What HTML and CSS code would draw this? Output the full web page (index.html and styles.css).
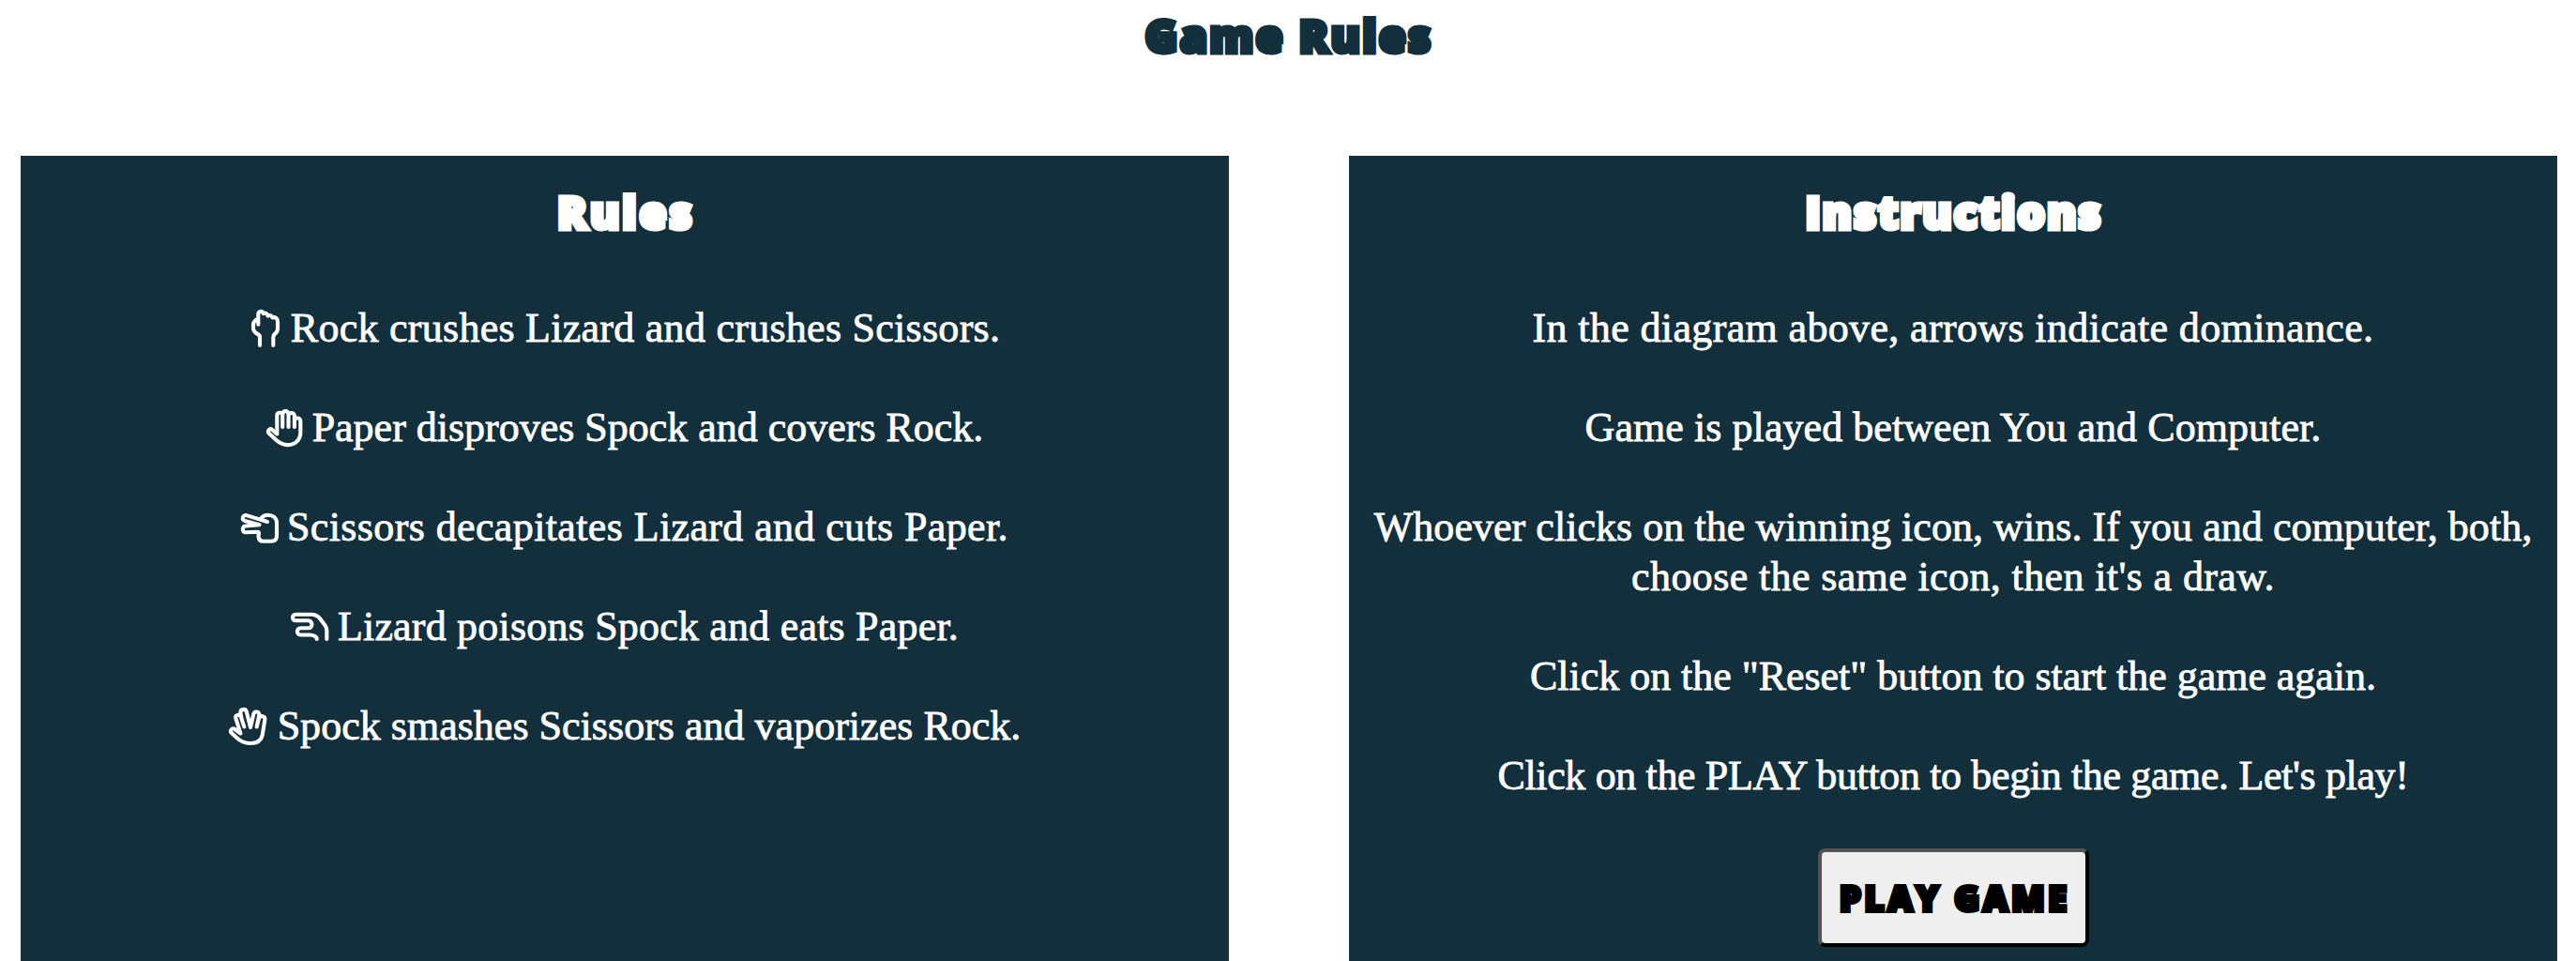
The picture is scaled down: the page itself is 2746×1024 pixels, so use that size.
FILE: index.html
```html
<!DOCTYPE html>
<html lang="en">
<head>
<meta charset="utf-8">
<title>Game Rules</title>
<link rel="stylesheet" href="styles.css">
</head>
<body>
<h1 class="display title">Game Rules</h1>
<main class="panels">
  <section class="panel">
    <h2 class="display heading-rules">Rules</h2>
    <ul class="lines">
      <li class="rule"><svg class="icon" width="35" height="40" viewBox="0 0 35 40"><path d="M11 38V28.6C11 25.5 4 26 4 19.5V16.5C4 13.5 6.3 10.8 9.3 9.7M9.3 15.7V5C9.3 1.4 13.5.7 14.9 4.2 17.2 2.9 19 4.200 19.6 6.6 21.500 5.300 23.500 6 24.300 8.500 27 7.500 30 9 30 12.500V20C30 26.500 25.300 24.500 25.300 29V38"/></svg><span class="t-rock">Rock crushes Lizard and crushes Scissors.</span></li>
      <li class="rule"><svg class="icon" width="40" height="40" viewBox="0 0 40 40"><path d="M17.200 19V6.500C17.200 2.800 11.300 2.800 11.300 6.500V26.500L6.300 22C3.500 19.700.3 23.200 3 26L10 32.500C14 36.200 18 38.100 22.800 38.100 30.500 38.100 36.300 32.500 36.300 25V12.500C36.300 8.500 29.900 8.500 29.900 12.500V19M17.200 19V5.500C17.200 1 23.500 1 23.500 5.500V19M23.500 7C23.500 3 29.900 3 29.900 7V19"/></svg><span class="t-paper">Paper disproves Spock and covers Rock.</span></li>
      <li class="rule"><svg class="icon" width="40" height="40" viewBox="0 0 40 40"><path d="M28 14 5.800 7.100C1.700 6 .3 11.700 4 13L19.500 17.300 4.800 18.500C.8 19 .8 25.300 5 25.300L17.500 24.800C20.500 24.800 18 27.500 18.600 30.500 19.200 33.500 21 34.800 23.500 34.800H32C36 34.800 38 32.500 38 29V15.500C38 9.500 33.500 6.700 28.500 6.700 25.500 6.700 23.500 7.500 21.500 10"/></svg><span class="t-scissors">Scissors decapitates Lizard and cuts Paper.</span></li>
      <li class="rule"><svg class="icon" width="41" height="40" viewBox="0 0 41 40"><path d="M38.300 33V23.500C38.300 21.500 37.600 20 36.400 18.200L31 11C28.500 8 26 6.700 22 6.700H5.300C.9 6.700.9 13.300 5.300 13.300H18.500C23.800 13.300 23.800 21.300 18.500 21.300H10.500C5.700 21.300 5.700 28.500 10.500 28.500H20.500C24 28.500 27.700 30.500 27.700 33"/></svg><span class="t-lizard">Lizard poisons Spock and eats Paper.</span></li>
      <li class="rule"><svg class="icon" width="43" height="40" viewBox="0 0 43 40"><path d="M16.300 20.500 12.900 9.800C11.400 6 6.300 7.800 7.400 11.700L12.400 27.500 6.300 23C3.500 21 .3 24.800 3 27.200L10 33.500C14 36.800 18 38 23 38 30.500 38 34.300 35.500 35.700 29.500L38.300 13C39 8.700 33 7.700 32 11.500L29.700 20.500M13.300 11 12.400 5.700C12 1.300 17.700.4 18.900 4.800L23 21 26.200 7.200C27.300 2.900 33 4 32.200 8.300L29.700 20.500"/></svg><span class="t-spock">Spock smashes Scissors and vaporizes Rock.</span></li>
    </ul>
  </section>
  <section class="panel">
    <h2 class="display heading-instructions">Instructions</h2>
    <div class="lines">
      <p class="t-diagram">In the diagram above, arrows indicate dominance.</p>
      <p class="t-players">Game is played between You and Computer.</p>
      <p class="t-winner">Whoever clicks on the winning icon, wins. If you and computer, both,<br><span class="t-draw">choose the same icon, then it's a draw.</span></p>
      <p class="t-reset">Click on the "Reset" button to start the game again.</p>
      <p class="t-play">Click on the PLAY button to begin the game. Let's play!</p>
    </div>
    <button class="play">PLAY GAME</button>
  </section>
</main>
</body>
</html>
```
FILE: styles.css
```css
* { box-sizing: border-box; }

body {
  margin: 0;
  height: 1024px;
  overflow: hidden;
  display: flex;
  flex-direction: column;
  background: #fff;
  font-family: "Liberation Serif", serif;
}

.display {
  font: 800 47px/60px "Open Sans", sans-serif;
  -webkit-text-stroke: 5px currentColor;
  text-align: center;
  margin: 0;
}

.title {
  color: #122f3b;
  padding-top: 8px;
  margin-bottom: 98px;
  letter-spacing: 2.3px;
  text-indent: 2.3px;
}

.panels {
  flex: 1;
  display: grid;
  grid-template-columns: 1288px 1288px;
  column-gap: 128px;
  padding-left: 22px;
}

.panel {
  display: flex;
  flex-direction: column;
  align-items: center;
  padding-top: 30px;
  background: #122f3b;
  color: #fff;
}

.heading-rules { letter-spacing: 3px; text-indent: 3px; }
.heading-instructions { letter-spacing: 1.8px; text-indent: 1.8px; }

.lines {
  display: flex;
  flex-direction: column;
  gap: 53px;
  margin: 67px 0 0;
  padding: 0;
  list-style: none;
  font-size: 44px;
  line-height: 53px;
  text-align: center;
  white-space: nowrap;
  -webkit-text-stroke: 0.8px currentColor;
}

.lines p { margin: 0; }

.rule {
  height: 53px;
  display: flex;
  align-items: center;
  justify-content: center;
  gap: 9px;
}

.icon {
  flex: none;
  fill: none;
  stroke: #fff;
  stroke-width: 4.1;
  stroke-linecap: round;
  stroke-linejoin: round;
  overflow: visible;
}

.t-rock { letter-spacing: 0.27px; }
.t-paper { letter-spacing: -0.01px; }
.t-scissors { letter-spacing: 0.38px; }
.t-lizard { letter-spacing: 0.2px; }
.t-spock { letter-spacing: 0.02px; }
.t-diagram { letter-spacing: 0.36px; }
.t-players { letter-spacing: 0.07px; }
.t-winner { letter-spacing: 0.05px; }
.t-draw { letter-spacing: 0.38px; }
.t-reset { letter-spacing: -0.03px; }
.t-play { letter-spacing: -0.36px; }

.play {
  width: 289px;
  height: 105px;
  margin-top: 51px;
  padding: 0;
  border: 4px solid;
  border-color: #545454 #000 #000 #545454;
  border-radius: 8px;
  background: #efefef;
  color: #000;
  font: 800 37px/97px "Open Sans", sans-serif;
  letter-spacing: 3.3px;
  text-indent: 3.3px;
  -webkit-text-stroke: 4px currentColor;
}
```
